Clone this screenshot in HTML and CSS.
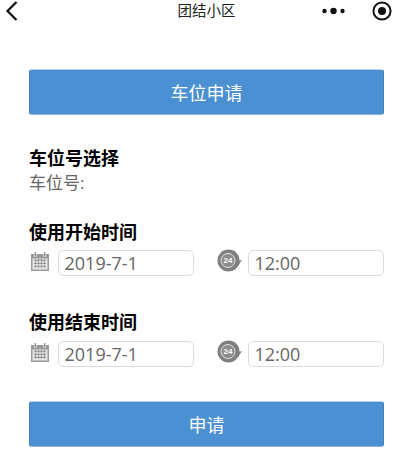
FILE: index.html
```html
<!DOCTYPE html>
<html lang="en">
<head>
    <meta charset="UTF-8">
    <meta name="viewport" content="width=device-width, initial-scale=1.0">
    <title>团结小区</title>
    <link rel="stylesheet" href="styles.css">
</head>
<body>
    <div class="nav-bar">
        <svg class="nav-back" width="14" height="22" viewBox="0 0 14 22">
            <path d="M11.5 2 L2.5 11 L11.5 20" fill="none" stroke="#111" stroke-width="2.2"/>
        </svg>
        <div class="nav-title">团结小区</div>
        <svg class="nav-more" width="24" height="8" viewBox="0 0 24 8">
            <circle cx="2.5" cy="4" r="2.2" fill="#111"/>
            <circle cx="11.5" cy="4" r="3.2" fill="#111"/>
            <circle cx="20.5" cy="4" r="2.2" fill="#111"/>
        </svg>
        <svg class="nav-target" width="20" height="20" viewBox="0 0 20 20">
            <circle cx="10" cy="10" r="8.6" fill="none" stroke="#111" stroke-width="2"/>
            <circle cx="10" cy="10" r="4" fill="#111"/>
        </svg>
    </div>

    <div class="content">
        <button class="big-button top-button">车位申请</button>

        <div class="section-title first-title">车位号选择</div>
        <div class="parking-label">车位号:</div>

        <div class="section-title start-title">使用开始时间</div>
        <div class="time-row">
            <svg class="calendar-icon" width="18" height="19" viewBox="0 0 18 19">
                <path d="M0 2 H3 V4.5 H5.5 V2 H12.5 V4.5 H15 V2 H18 V19 H0 Z" fill="#9a9a9a"/>
                <rect x="3.6" y="0" width="1.4" height="4" fill="#8f8f8f"/>
                <rect x="13" y="0" width="1.4" height="4" fill="#8f8f8f"/>
                <path d="M1.5 6.5 H16.5 V17.5 H1.5 Z" fill="#e6e6e6"/>
                <path d="M4.5 7.5 V16.5 M7.5 7.5 V16.5 M10.5 7.5 V16.5 M13.5 7.5 V16.5" stroke="#6f6f6f" stroke-width="1.8" stroke-dasharray="1.8 1.2" fill="none"/>
            </svg>
            <div class="time-input">2019-7-1</div>
            <svg class="clock-icon" width="25" height="23" viewBox="0 0 25 23">
                <circle cx="11.5" cy="11.5" r="11" fill="#7f7f7f"/>
                <circle cx="11" cy="11.5" r="7" fill="#8c8c8c" stroke="#e4e4e4" stroke-width="1"/>
                <path d="M18 13 L25 11 L21 17 Z" fill="#7f7f7f"/>
                <text x="11" y="14.2" class="clock-text">24</text>
            </svg>
            <div class="time-input">12:00</div>
        </div>

        <div class="section-title end-title">使用结束时间</div>
        <div class="time-row end-row">
            <svg class="calendar-icon" width="18" height="19" viewBox="0 0 18 19">
                <path d="M0 2 H3 V4.5 H5.5 V2 H12.5 V4.5 H15 V2 H18 V19 H0 Z" fill="#9a9a9a"/>
                <rect x="3.6" y="0" width="1.4" height="4" fill="#8f8f8f"/>
                <rect x="13" y="0" width="1.4" height="4" fill="#8f8f8f"/>
                <path d="M1.5 6.5 H16.5 V17.5 H1.5 Z" fill="#e6e6e6"/>
                <path d="M4.5 7.5 V16.5 M7.5 7.5 V16.5 M10.5 7.5 V16.5 M13.5 7.5 V16.5" stroke="#6f6f6f" stroke-width="1.8" stroke-dasharray="1.8 1.2" fill="none"/>
            </svg>
            <div class="time-input">2019-7-1</div>
            <svg class="clock-icon" width="25" height="23" viewBox="0 0 25 23">
                <circle cx="11.5" cy="11.5" r="11" fill="#7f7f7f"/>
                <circle cx="11" cy="11.5" r="7" fill="#8c8c8c" stroke="#e4e4e4" stroke-width="1"/>
                <path d="M18 13 L25 11 L21 17 Z" fill="#7f7f7f"/>
                <text x="11" y="14.2" class="clock-text">24</text>
            </svg>
            <div class="time-input">12:00</div>
        </div>

        <button class="big-button bottom-button">申请</button>
    </div>
</body>
</html>
```

FILE: styles.css
```css
body {
    margin: 0;
    padding: 0;
    background-color: #fff;
    font-family: "Open Sans", "Noto Sans CJK SC", sans-serif;
    overflow: hidden;
}

.nav-bar {
    display: flex;
    align-items: center;
    height: 22px;
    position: relative;
}

.nav-back {
    margin-left: 5px;
}

.nav-title {
    position: absolute;
    left: 0;
    right: 0;
    text-align: center;
    font-size: 14.5px;
    line-height: 22px;
    color: #222;
}

.nav-more {
    margin-left: auto;
}

.nav-target {
    margin-left: 26px;
    margin-right: 21px;
}

.content {
    padding: 47px 29px 0;
}

.big-button {
    display: block;
    box-sizing: border-box;
    width: 100%;
    height: 46px;
    padding: 0;
    font-family: inherit;
    font-size: 18px;
    color: #fff;
    background-color: #4a90d2;
    border: 1px solid #4681bc;
    border-top-color: #b9d0e8;
    border-bottom-color: #8fb4d9;
    border-radius: 3px;
}

.section-title {
    font-size: 18px;
    font-weight: bold;
    line-height: 24px;
    color: #000;
}

.first-title {
    margin-top: 31px;
}

.start-title {
    margin-top: 24px;
}

.end-title {
    margin-top: 34px;
}

.parking-label {
    font-size: 17px;
    line-height: 26px;
    color: #666;
}

.time-row {
    display: flex;
    align-items: flex-start;
    margin-top: 6px;
}

.end-row {
    margin-top: 7px;
}

.calendar-icon {
    margin-top: 2px;
    margin-left: 2px;
    margin-right: 9px;
}

.clock-icon {
    margin-top: -1px;
    margin-left: 23px;
    margin-right: 6px;
}

.clock-text {
    font-family: "Liberation Sans", sans-serif;
    font-size: 8px;
    font-weight: bold;
    fill: #fff;
    text-anchor: middle;
}

.time-input {
    box-sizing: border-box;
    width: 136px;
    height: 26px;
    padding-left: 5.5px;
    font-size: 18px;
    line-height: 24px;
    color: #666;
    border: 1.5px solid #dcdcdc;
    border-radius: 5px;
}

.bottom-button {
    margin-top: 34px;
}
```
